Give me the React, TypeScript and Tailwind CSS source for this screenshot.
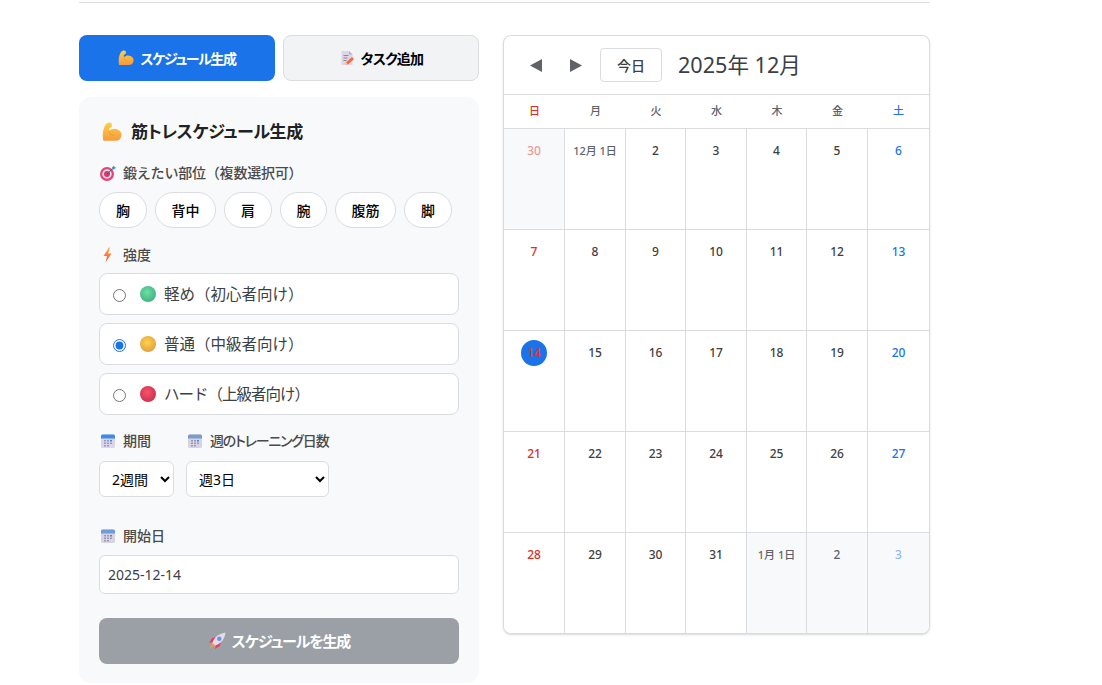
import type { ReactNode } from "react";

const FONT = { fontFamily: '"Noto Sans", "Noto Sans CJK JP", sans-serif' };

const Biceps = ({ id, size = 16 }: { id: string; size?: number }) => (
  <svg width={size} height={size} viewBox="0 0 32 32" className="shrink-0">
    <defs>
      <linearGradient id={id} x1="0" y1="0" x2="0" y2="1">
        <stop offset="0" stopColor="#ffcf45" />
        <stop offset="1" stopColor="#f59a3e" />
      </linearGradient>
    </defs>
    <path
      d="M2 29C0 20 2 10 6 4c2-3 7-4 9-2 2 2 1 6-2 7-2 1-2 3-1 5 3-3 9-4 13-2 5 2 7 6 6 10-1 6-5 8-10 8H5c-2 0-3 0-3-1z"
      fill={`url(#${id})`}
    />
    <path d="M12 15c0 4 3 7 7 7" stroke="#ea8a30" strokeWidth="1" fill="none" />
  </svg>
);

const Memo = () => (
  <svg width="16" height="16" viewBox="0 0 32 32" className="shrink-0">
    <path d="M5 2h15l7 7v21H5z" fill="#ddd6e6" />
    <path d="M20 2l7 7h-7z" fill="#b9aec9" />
    <path d="M9 11h10M9 16h8M9 21h6" stroke="#8e8599" strokeWidth="2" />
    <path d="M14 25l12-11 4 4-12 11-5 1z" fill="#f4683c" />
    <path d="M13 30l1-5 4 4z" fill="#ffd8a8" />
  </svg>
);

const Target = () => (
  <svg width="16" height="16" viewBox="0 0 32 32" className="shrink-0">
    <circle cx="14" cy="18" r="14" fill="#e0457b" />
    <circle cx="14" cy="18" r="9.5" fill="#f3dbe4" />
    <circle cx="14" cy="18" r="6" fill="#d9376e" />
    <path d="M14 18L27 6" stroke="#4a5a78" strokeWidth="2" />
    <path d="M24 5l4-4 1 3 3 1-4 4-3-1z" fill="#3f8fe0" />
  </svg>
);

const Bolt = () => (
  <svg width="16" height="16" viewBox="0 0 32 32" className="shrink-0">
    <defs>
      <linearGradient id="boltFill" x1="0" y1="0" x2="0" y2="1">
        <stop offset="0" stopColor="#ffa43d" />
        <stop offset="1" stopColor="#f4573f" />
      </linearGradient>
    </defs>
    <path d="M18 1L7 18h7l-3 13 12-18h-7l4-12z" fill="url(#boltFill)" />
  </svg>
);

const Cal = ({ head = "#3f8ae8", body = "#dcd5ee" }: { head?: string; body?: string }) => (
  <svg width="16" height="16" viewBox="0 0 32 32" className="shrink-0">
    <rect x="2" y="3" width="28" height="27" rx="3" fill={body} />
    <path d="M2 6a3 3 0 0 1 3-3h22a3 3 0 0 1 3 3v5H2z" fill={head} />
    <g fill="#9a9ab8">
      <rect x="8" y="14" width="4" height="3" />
      <rect x="14" y="14" width="4" height="3" />
      <rect x="20" y="14" width="4" height="3" fill="#3f8ae8" />
      <rect x="8" y="19" width="4" height="3" />
      <rect x="14" y="19" width="4" height="3" />
      <rect x="20" y="19" width="4" height="3" />
      <rect x="8" y="24" width="4" height="3" />
      <rect x="14" y="24" width="4" height="3" />
    </g>
  </svg>
);

const Rocket = () => (
  <svg width="18" height="18" viewBox="0 0 32 32" className="shrink-0">
    <path d="M10 17l-8 3 5-9 7-2zM15 22l-3 8 9-5 2-7z" fill="#f0386b" />
    <path d="M8 24C7 13 17 3 31 1c-1 14-12 24-23 23z" fill="#e2dee8" />
    <circle cx="20" cy="12" r="4" fill="#6f8fe8" />
    <path d="M8 21l-6 9 9-5 1-2-2-2z" fill="#f59a3c" />
  </svg>
);

const Ball = ({ id, light, dark }: { id: string; light: string; dark: string }) => (
  <svg width="16" height="16" viewBox="0 0 16 16" className="shrink-0">
    <defs>
      <radialGradient id={id} cx="0.45" cy="0.4" r="0.65">
        <stop offset="0" stopColor={light} />
        <stop offset="1" stopColor={dark} />
      </radialGradient>
    </defs>
    <circle cx="8" cy="8" r="8" fill={`url(#${id})`} />
  </svg>
);

const Label = ({ icon, children, textClass = "" }: { icon: ReactNode; children: ReactNode; textClass?: string }) => (
  <div className="flex items-center gap-[7px] pl-[1px] text-[14px] leading-[20px] font-medium text-[#4a4a4a]">
    {icon}
    <span className={textClass}>{children}</span>
  </div>
);

const parts = [
  { name: "胸", pad: "px-[16px]" },
  { name: "背中", pad: "px-[15.5px]" },
  { name: "肩", pad: "px-[16px]" },
  { name: "腕", pad: "px-[15.5px]" },
  { name: "腹筋", pad: "px-[15.5px]" },
  { name: "脚", pad: "px-[16px]" },
];

const levels = [
  { id: "ballGreen", light: "#6fe0a0", dark: "#3fae86", text: "軽め（初心者向け）", track: "pt-[1px]", checked: false },
  { id: "ballYellow", light: "#ffd24f", dark: "#dd9f3c", text: "普通（中級者向け）", track: "pt-[1px]", checked: true },
  { id: "ballRed", light: "#f8526a", dark: "#c9304e", text: "ハード（上級者向け）", track: "pt-[1px] tracking-[-1px]", checked: false },
];

const weekdays = ["日", "月", "火", "水", "木", "金", "土"];

type Day = { label: string; other?: boolean; small?: boolean; today?: boolean };

const days: Day[] = [
  { label: "30", other: true },
  { label: "12月 1日", small: true },
  ...["2", "3", "4", "5", "6", "7", "8", "9", "10", "11", "12", "13"].map((label) => ({ label })),
  { label: "14", today: true },
  ...Array.from({ length: 17 }, (_, i) => ({ label: String(i + 15) })),
  { label: "1月 1日", other: true, small: true },
  { label: "2", other: true },
  { label: "3", other: true },
];

const dayColor = (index: number, day: Day) => {
  const col = index % 7;
  if (day.today) return "text-[#e0364f]";
  if (col === 0) return day.other ? "text-[#ec9a94]" : "text-[#d93025]";
  if (col === 6) return day.other ? "text-[#8db9f3]" : "text-[#1a73e8]";
  if (day.other || day.small) return "text-[#5f6368]";
  return "text-[#3c4043]";
};

export default function App() {
  return (
    <div style={FONT} className="w-[1102px] bg-white pl-[79px]">
      <div className="w-[851px]">
        <div className="h-[3px] border-b border-[#e0e0e0]" />
        <div className="mt-[32px] flex items-start gap-[24px]">
          <div className="w-[400px]">
            <div className="flex gap-[8px]">
              <button className="flex h-[46px] w-[196px] items-center justify-center gap-[6px] rounded-[8px] bg-[#1a73e8] text-[14px] font-semibold text-white">
                <Biceps id="bicepsTab" />
                <span className="tracking-[-1.4px] [font-feature-settings:'palt']">スケジュール生成</span>
              </button>
              <button className="flex h-[46px] w-[196px] items-center justify-center gap-[6px] rounded-[8px] border border-[#dadce0] bg-[#f1f3f4] text-[14px] font-semibold text-black">
                <Memo />
                <span className="tracking-[-0.8px] [font-feature-settings:'palt']">タスク追加</span>
              </button>
            </div>

            <div className="mt-[16px] rounded-[12px] bg-[#f8f9fa] px-[20px] pt-[21px] pb-[19px]">
              <div className="flex h-[28px] items-center gap-[9px] pl-[3px] text-[17px] font-semibold tracking-[-0.4px] text-[#202124] [font-feature-settings:'palt']">
                <Biceps id="bicepsTitle" size={20} />
                筋トレスケジュール生成
              </div>

              <div className="mt-[17px]">
                <Label icon={<Target />} textClass="tracking-[-0.2px]">
                  鍛えたい部位（複数選択可）
                </Label>
              </div>
              <div className="mt-[9px] flex gap-[8px]">
                {parts.map((part) => (
                  <button
                    key={part.name}
                    className={`h-[36px] rounded-full border border-[#dadce0] bg-white text-[14px] font-medium text-black ${part.pad}`}
                  >
                    {part.name}
                  </button>
                ))}
              </div>

              <div className="mt-[17px]">
                <Label icon={<Bolt />}>強度</Label>
              </div>
              <div className="mt-[8px] flex flex-col gap-[8px]">
                {levels.map((level) => (
                  <label
                    key={level.id}
                    className="flex h-[42px] items-center rounded-[8px] border border-[#dadce0] bg-white pl-[13px] text-[15.5px] text-[#3c4043]"
                  >
                    <input
                      type="radio"
                      name="level"
                      defaultChecked={level.checked}
                      className="m-0 mt-[2px] h-[13px] w-[13px] accent-[#1a73e8]"
                    />
                    <span className="ml-[14px] mr-[8px]">
                      <Ball id={level.id} light={level.light} dark={level.dark} />
                    </span>
                    <span className={level.track}>{level.text}</span>
                  </label>
                ))}
              </div>

              <div className="mt-[16px] flex gap-[12px]">
                <div>
                  <Label icon={<Cal />}>期間</Label>
                  <select
                    defaultValue="2週間"
                    className="mt-[10px] h-[36px] w-[75px] rounded-[6px] border border-[#dadce0] bg-white pl-[8px] text-[14px] text-black"
                  >
                    <option>1週間</option>
                    <option>2週間</option>
                    <option>4週間</option>
                  </select>
                </div>
                <div>
                  <Label
                    icon={<Cal head="#7f9cc8" body="#d6d4e2" />}
                    textClass="tracking-[-1.2px] [font-feature-settings:'palt']"
                  >
                    週のトレーニング日数
                  </Label>
                  <select
                    defaultValue="週3日"
                    className="mt-[10px] h-[36px] w-[143px] rounded-[6px] border border-[#dadce0] bg-white pl-[8px] text-[14px] text-black"
                  >
                    <option>週2日</option>
                    <option>週3日</option>
                    <option>週4日</option>
                  </select>
                </div>
              </div>

              <div className="mt-[29px]">
                <Label icon={<Cal head="#6f9bd8" body="#d6d4e2" />}>開始日</Label>
              </div>
              <input
                type="text"
                defaultValue="2025-12-14"
                className="mt-[9px] block h-[39px] w-full rounded-[6px] border border-[#dadce0] bg-white px-[8px] text-[14px] text-[#3c4043] outline-none"
              />

              <button className="mt-[24px] flex h-[46px] w-full items-center justify-center gap-[6px] rounded-[8px] bg-[#9aa0a6] text-[15px] font-semibold text-white">
                <Rocket />
                <span className="tracking-[-1.1px] [font-feature-settings:'palt']">スケジュールを生成</span>
              </button>
            </div>
          </div>

          <div className="w-[427px] overflow-hidden rounded-[8px] border border-[#dadce0] bg-white shadow-[0_1px_2px_rgba(60,64,67,0.2)] [font-feature-settings:'palt']">
            <div className="flex h-[59px] items-center border-b border-[#dadce0] pl-[12px]">
              <button className="flex h-[34px] w-[40px] items-center justify-center">
                <svg width="12" height="13" viewBox="0 0 12 13">
                  <path d="M12 0v13L0 6.5z" fill="#5f6368" />
                </svg>
              </button>
              <button className="flex h-[34px] w-[40px] items-center justify-center">
                <svg width="12" height="13" viewBox="0 0 12 13">
                  <path d="M0 0v13l12-6.5z" fill="#5f6368" />
                </svg>
              </button>
              <button className="ml-[4px] h-[34px] w-[62px] rounded-[4px] border border-[#dadce0] text-[14px] font-medium text-[#3c4043]">
                今日
              </button>
              <h2 className="ml-[16px] text-[21.6px] font-normal text-[#3c4043]">2025年 12月</h2>
            </div>

            <div className="grid grid-cols-[61px_61px_60px_61px_60px_61px_1fr]">
              {weekdays.map((name, i) => (
                <div
                  key={name}
                  className={`flex h-[34px] items-center justify-center border-b border-[#dadce0] text-[11px] font-medium ${
                    i === 0 ? "text-[#d93025]" : i === 6 ? "text-[#1a73e8]" : "text-[#5f6368]"
                  }`}
                >
                  {name}
                </div>
              ))}
              {days.map((day, i) => (
                <div
                  key={i}
                  className={`flex justify-center pt-[10px] ${i < 28 ? "h-[101px] border-b" : "h-[100px]"} ${
                    i % 7 < 6 ? "border-r" : ""
                  } border-[#dadce0] ${day.other ? "bg-[#f8f9fa]" : "bg-white"}`}
                >
                  <span
                    className={`font-medium ${day.small ? "text-[11px]" : "text-[12px]"} ${dayColor(i, day)} ${
                      day.today
                        ? "-mt-[1px] flex h-[26px] w-[26px] items-center justify-center rounded-full bg-[#1a73e8]"
                        : "flex h-[24px] items-center"
                    }`}
                  >
                    {day.label}
                  </span>
                </div>
              ))}
            </div>
          </div>
        </div>
      </div>
    </div>
  );
}
